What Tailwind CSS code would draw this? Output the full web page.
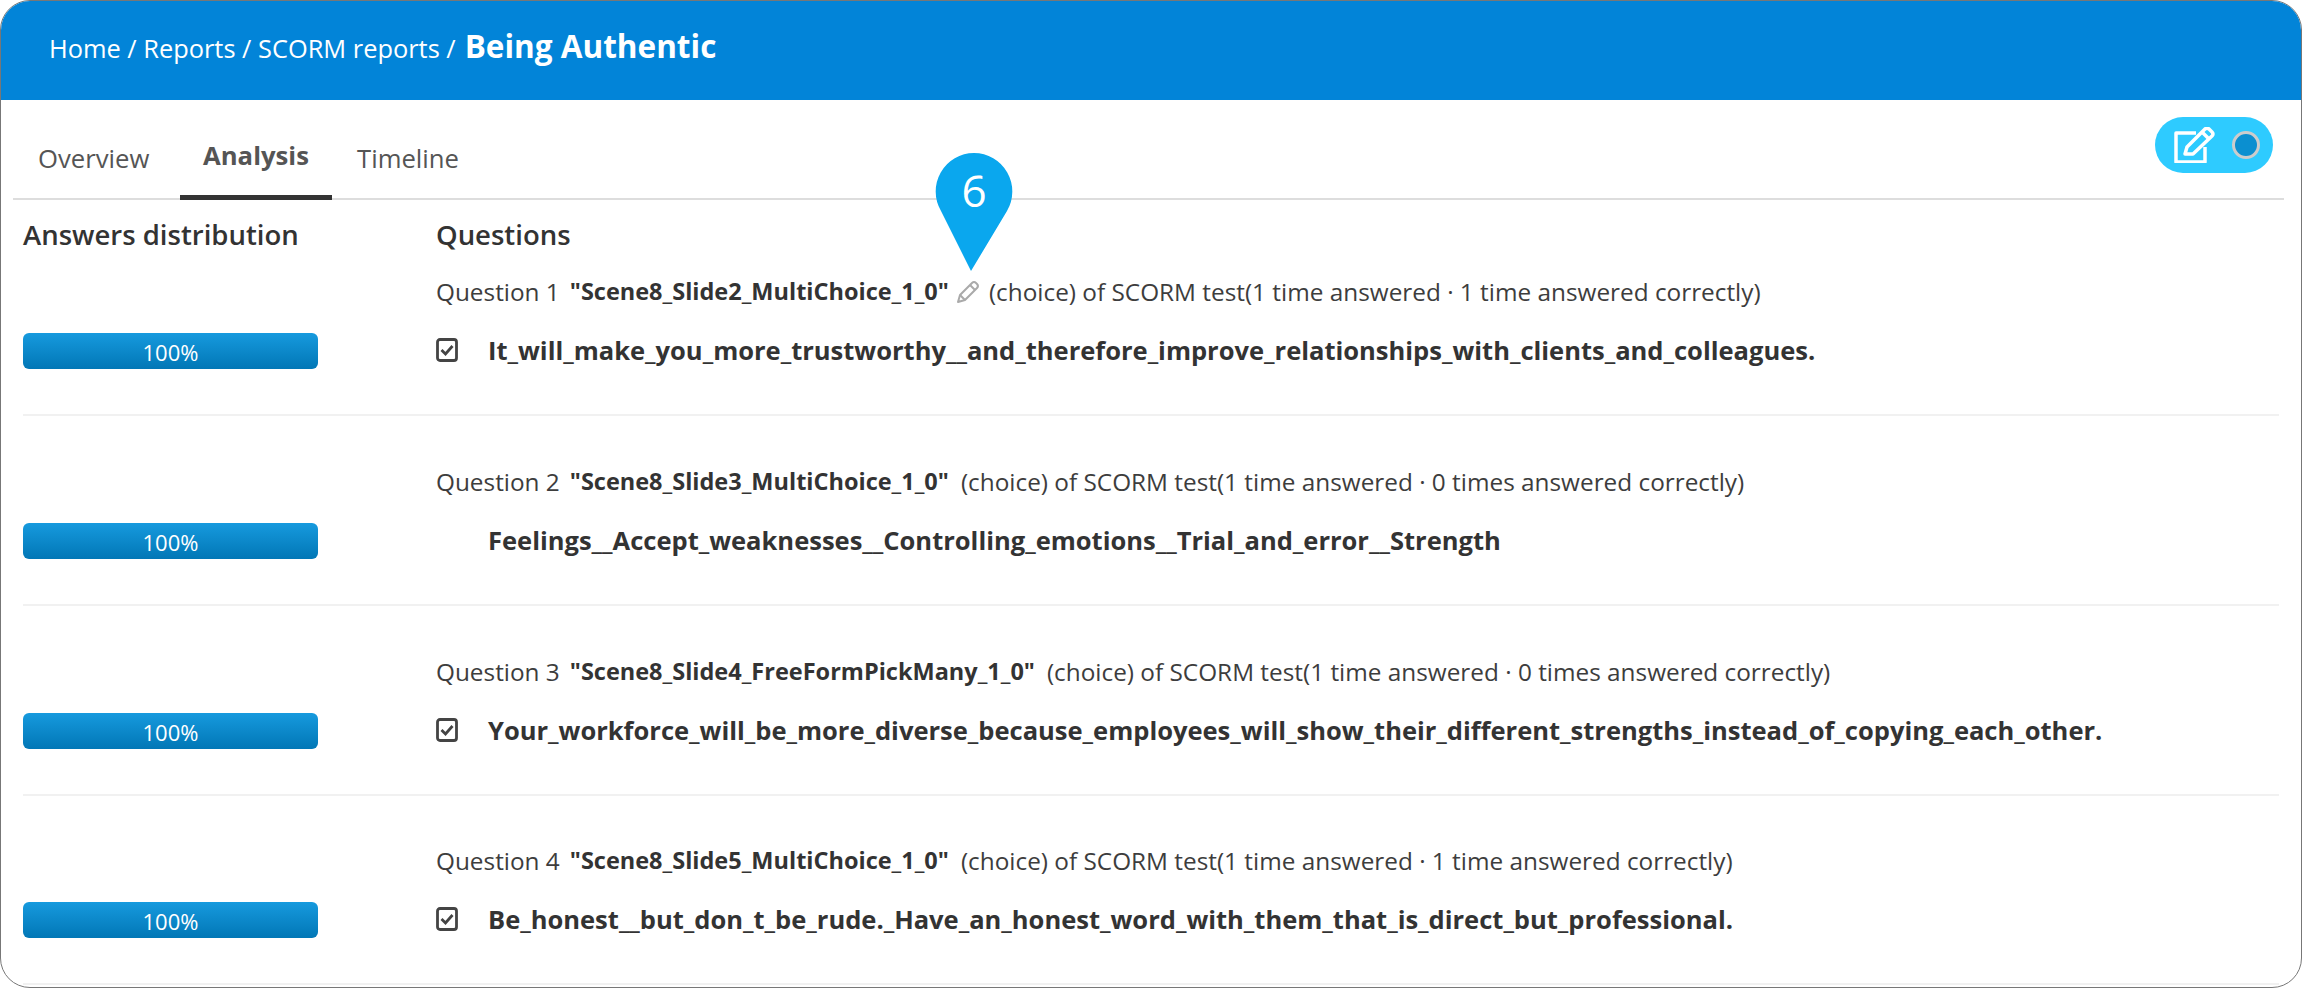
<!DOCTYPE html>
<html lang="en">

<head>
    <meta charset="UTF-8">
    <title>Being Authentic</title>
    <script src="https://cdn.jsdelivr.net/npm/@tailwindcss/browser@4"></script>
</head>

<body class="bg-white font-['Open_Sans',sans-serif] text-[#333]">
    <div class="relative h-[988px] overflow-hidden rounded-[30px] border border-[#777] bg-white">
        <header class="flex h-[99px] items-start gap-[9px] bg-[#0284d8] pl-[48px] pt-[27px] text-white">
            <span class="text-[25.400px] leading-[40px]">Home / Reports / SCORM reports /</span>
            <span class="text-[31.500px] font-bold leading-[36px]">Being Authentic</span>
        </header>

        <div class="ml-[12px] mr-[17px] flex h-[100px] items-end justify-between border-b-2 border-[#ddd]">
            <nav class="flex text-[25.700px] text-[#555]">
                <a class="h-[57px] w-[167px] pl-[25px] pt-[3px]">Overview</a>
                <a class="-mb-[2px] h-[63px] w-[152px] border-b-[5px] border-[#333] text-center font-bold">Analysis</a>
                <a class="h-[57px] pl-[25px] pt-[3px]">Timeline</a>
            </nav>
            <div class="mb-[25px] mr-[11px] flex h-[56px] w-[118px] items-center justify-between rounded-full bg-[#2ecbff] pl-[19px] pr-[13px]">
                <svg class="h-[36px] w-[42px]" viewBox="0 0 42 36" fill="none" stroke="#fff" stroke-width="3.500" stroke-linejoin="round">
                    <path d="M22 6H2v29h29V20" />
                    <path d="M11 27l2-7L31 2q2-1.500 4 0l3 3q2 2 0 4L19 27z" />
                    <path d="M28 5l7 7" />
                </svg>
                <span class="h-[28px] w-[28px] rounded-full border-[3px] border-[#ccc] bg-[#0b8fd0]"></span>
            </div>
        </div>

        <main class="px-[22px]">
            <div class="flex h-[71px] items-start pt-[17px] text-[27.500px] font-semibold leading-[36px]">
                <h2 class="w-[413px]">Answers distribution</h2>
                <h2>Questions</h2>
            </div>

            <!-- question rows -->
            <section class="flex h-[145px] items-end border-b-2 border-[#f1f1f1] pb-[45px]">
                <div class="w-[413px]"><div class="h-[36px] w-[295px] rounded-[6px] bg-gradient-to-b from-[#169ade] to-[#0277b6] text-center text-[22px] leading-[39px] text-white">100%</div></div>
                <div>
                    <p class="flex h-[36px] items-center text-[24.350px] text-[#3d3d3d]">Question 1 <b class="ml-[10px] text-[23.500px] font-bold text-[#333]">"Scene8_Slide2_MultiChoice_1_0"</b>
                        <svg class="ml-[7px] mr-[9px] h-[24px] w-[24px]" viewBox="0 0 24 24" fill="none" stroke="#aaa" stroke-width="2" stroke-linejoin="round"><path d="M2 22l2-7L16 3q2-2 4 0l1 1q2 2 0 4L9 20z" /><path d="M4 15l5 5M14 5l5 5" /></svg>
                        (choice) of SCORM test(1 time answered · 1 time answered correctly)</p>
                    <p class="mt-[23px] flex h-[36px] items-center pb-[2px] text-[25.530px] font-bold">
                        <svg class="mr-[30px] h-[24px] w-[22px]" viewBox="0 0 22 24" fill="none" stroke="#444" stroke-width="2.800"><rect x="1.500" y="1.500" width="19" height="21" rx="2.500" /><path d="M5.500 12l4 4 7-8" /></svg>
                        It_will_make_you_more_trustworthy__and_therefore_improve_relationships_with_clients_and_colleagues.</p>
                </div>
            </section>

            <section class="flex h-[190px] items-end border-b-2 border-[#f1f1f1] pb-[45px]">
                <div class="w-[413px]"><div class="h-[36px] w-[295px] rounded-[6px] bg-gradient-to-b from-[#169ade] to-[#0277b6] text-center text-[22px] leading-[39px] text-white">100%</div></div>
                <div>
                    <p class="flex h-[36px] items-center text-[24.350px] text-[#3d3d3d]">Question 2 <b class="ml-[10px] mr-[12px] text-[23.500px] font-bold text-[#333]">"Scene8_Slide3_MultiChoice_1_0"</b>
                        (choice) of SCORM test(1 time answered · 0 times answered correctly)</p>
                    <p class="mt-[23px] flex h-[36px] items-center pb-[2px] pl-[52px] text-[25.530px] font-bold">Feelings__Accept_weaknesses__Controlling_emotions__Trial_and_error__Strength</p>
                </div>
            </section>

            <section class="flex h-[190px] items-end border-b-2 border-[#f1f1f1] pb-[45px]">
                <div class="w-[413px]"><div class="h-[36px] w-[295px] rounded-[6px] bg-gradient-to-b from-[#169ade] to-[#0277b6] text-center text-[22px] leading-[39px] text-white">100%</div></div>
                <div>
                    <p class="flex h-[36px] items-center text-[24.350px] text-[#3d3d3d]">Question 3 <b class="ml-[10px] mr-[12px] text-[23.500px] font-bold text-[#333]">"Scene8_Slide4_FreeFormPickMany_1_0"</b>
                        (choice) of SCORM test(1 time answered · 0 times answered correctly)</p>
                    <p class="mt-[23px] flex h-[36px] items-center pb-[2px] text-[25.530px] font-bold">
                        <svg class="mr-[30px] h-[24px] w-[22px]" viewBox="0 0 22 24" fill="none" stroke="#444" stroke-width="2.800"><rect x="1.500" y="1.500" width="19" height="21" rx="2.500" /><path d="M5.500 12l4 4 7-8" /></svg>
                        Your_workforce_will_be_more_diverse_because_employees_will_show_their_different_strengths_instead_of_copying_each_other.</p>
                </div>
            </section>

            <section class="flex h-[189px] items-end border-b-2 border-[#f1f1f1] pb-[45px]">
                <div class="w-[413px]"><div class="h-[36px] w-[295px] rounded-[6px] bg-gradient-to-b from-[#169ade] to-[#0277b6] text-center text-[22px] leading-[39px] text-white">100%</div></div>
                <div>
                    <p class="flex h-[36px] items-center text-[24.350px] text-[#3d3d3d]">Question 4 <b class="ml-[10px] mr-[12px] text-[23.500px] font-bold text-[#333]">"Scene8_Slide5_MultiChoice_1_0"</b>
                        (choice) of SCORM test(1 time answered · 1 time answered correctly)</p>
                    <p class="mt-[23px] flex h-[36px] items-center pb-[2px] text-[25.530px] font-bold">
                        <svg class="mr-[30px] h-[24px] w-[22px]" viewBox="0 0 22 24" fill="none" stroke="#444" stroke-width="2.800"><rect x="1.500" y="1.500" width="19" height="21" rx="2.500" /><path d="M5.500 12l4 4 7-8" /></svg>
                        Be_honest__but_don_t_be_rude._Have_an_honest_word_with_them_that_is_direct_but_professional.</p>
                </div>
            </section>
        </main>

        <svg class="absolute left-[934px] top-[152px] h-[118px] w-[78px]" viewBox="0 0 78 118"><path d="M39 0a38.500 38.500 0 0 1 33 58L36 118 6 58A38.500 38.500 0 0 1 39 0z" fill="#0aa7ee" /></svg>
        <span class="absolute left-[934px] top-[159px] w-[78px] text-center text-[44px] leading-[60px] text-white">6</span>
    </div>
</body>

</html>
